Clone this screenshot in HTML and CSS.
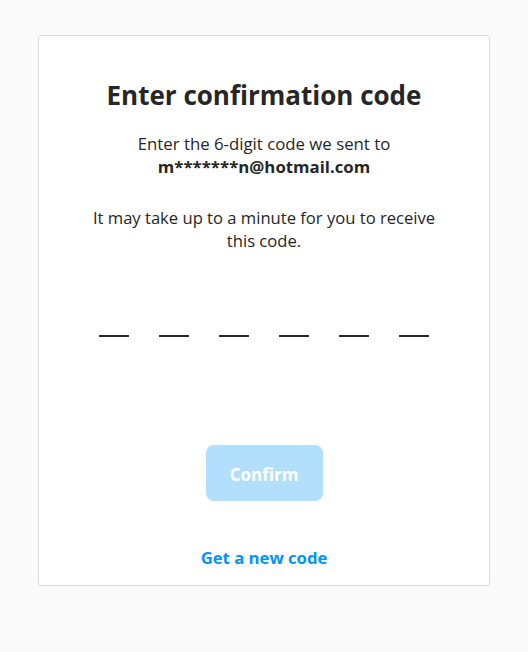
FILE: index.html
```html
<!DOCTYPE html>
<html>
<head>
<meta charset="utf-8">
<link rel="stylesheet" href="styles.css">
</head>
<body>
<div class="card">
  <h1 class="title">Enter confirmation code</h1>
  <p class="lead">Enter the 6-digit code we sent to<br><strong>m*******n@hotmail.com</strong></p>
  <p class="note">It may take up to a minute for you to receive this code.</p>
  <div class="code">
    <input class="digit" maxlength="1">
    <input class="digit" maxlength="1">
    <input class="digit" maxlength="1">
    <input class="digit" maxlength="1">
    <input class="digit" maxlength="1">
    <input class="digit" maxlength="1">
  </div>
  <button class="confirm" disabled>Confirm</button>
  <a class="resend" href="#">Get a new code</a>
</div>
</body>
</html>
```
FILE: styles.css
```css
html, body {
  margin: 0;
  padding: 0;
  background: #fafafa;
}
body {
  font-family: "Open Sans", "Noto Sans", sans-serif;
  color: #262626;
}
.card {
  box-sizing: border-box;
  margin: 35px 0 0 38px;
  width: 452px;
  height: 551px;
  background: #fff;
  border: 1px solid #dbdbdb;
  border-radius: 3px;
  display: flex;
  flex-direction: column;
  align-items: center;
  text-align: center;
  padding-top: 41px;
}
.title {
  margin: 0;
  font-size: 26px;
  font-weight: 700;
  line-height: 36px;
}
.lead {
  margin: 19px 0 0;
  font-size: 16.8px;
  line-height: 23px;
}
.lead strong {
  font-weight: 700;
}
.note {
  margin: 28px 0 0;
  width: 372px;
  font-size: 16.6px;
  line-height: 23px;
}
.code {
  margin-top: 55px;
  display: flex;
  gap: 30px;
}
.digit {
  width: 30px;
  height: 30px;
  padding: 0;
  border: 0;
  border-bottom: 2px solid #262626;
  box-sizing: border-box;
  outline: none;
  background: transparent;
  font: inherit;
  text-align: center;
}
.confirm {
  margin-top: 108px;
  width: 117px;
  height: 56px;
  padding: 2px 0 0;
  border: 0;
  border-radius: 8px;
  background: #b2dffc;
  color: #fff;
  font-family: inherit;
  font-size: 17px;
  font-weight: 700;
}
.resend {
  margin-top: 47px;
  font-size: 16.7px;
  font-weight: 700;
  color: #0095f6;
  text-decoration: none;
  line-height: 20px;
}
```
